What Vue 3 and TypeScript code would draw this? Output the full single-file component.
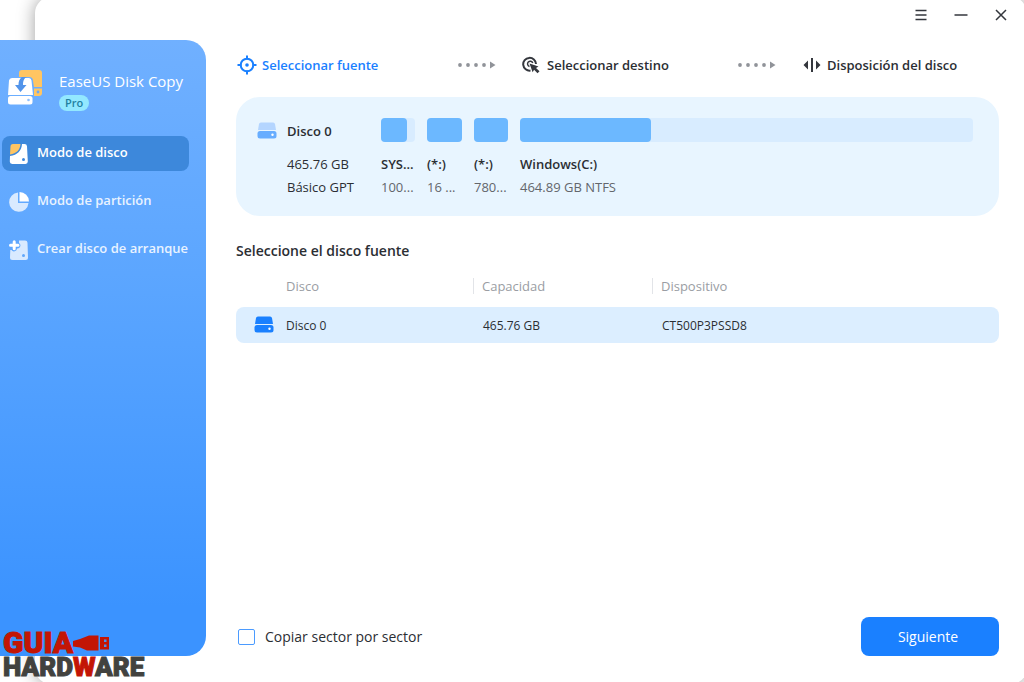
<script setup lang="ts">
import { ref } from 'vue'

interface Mode {
  id: 'disk' | 'partition' | 'boot'
  label: string
}

interface Partition {
  name: string
  detail: string
  used: number
}

const modes: Mode[] = [
  { id: 'disk', label: 'Modo de disco' },
  { id: 'partition', label: 'Modo de partición' },
  { id: 'boot', label: 'Crear disco de arranque' },
]

const partitions: Partition[] = [
  { name: 'SYS...', detail: '100...', used: 76 },
  { name: '(*:)', detail: '16 ...', used: 100 },
  { name: '(*:)', detail: '780...', used: 100 },
  { name: 'Windows(C:)', detail: '464.89 GB NTFS', used: 29 },
]

const activeMode = ref<Mode['id']>('disk')
const sectorBySector = ref(false)
</script>

<template>
  <div class="app">
    <aside class="sidebar">
      <div class="brand">
        <svg class="brand-icon" width="36" height="36" viewBox="0 0 36 36" aria-hidden="true">
          <path d="M14 0h17a3 3 0 0 1 3 3v14h-8l-1-6a4 4 0 0 0-4-4H11V3a3 3 0 0 1 3-3z" fill="#ffc562" />
          <path d="M26 18.500h8V23a3 3 0 0 1-3 3h-5z" fill="#ffc562" />
          <circle cx="30" cy="22" r="1.400" fill="#6aa9f5" />
          <path d="M4 8h17a3 3 0 0 1 2.500 2.500L25 25H0l1-14.500A3 3 0 0 1 4 8z" fill="#fff" />
          <path d="M19 7c-3 1-4 4-4 8h3.500L12.500 22 7 15h3.500c0-4 1-6 3.500-8z" fill="#5294ea" />
          <rect x="0" y="26" width="24.500" height="8.500" rx="2.500" fill="#fff" />
          <circle cx="20.500" cy="30" r="1.300" fill="#8fc1ff" />
        </svg>
        <div class="brand-text">
          <span class="brand-name">EaseUS Disk Copy</span>
          <span class="badge">Pro</span>
        </div>
      </div>
      <nav class="nav">
        <button
          v-for="mode in modes"
          :key="mode.id"
          type="button"
          class="nav-item"
          :class="{ active: activeMode === mode.id }"
          @click="activeMode = mode.id"
        >
          <svg v-if="mode.id === 'disk'" class="nav-icon" width="20" height="20" viewBox="0 0 20 20" aria-hidden="true">
            <path d="M4 0h7.500C11 6 7.500 9.500 1 10.500L1.500 2.500A2.500 2.500 0 0 1 4 0z" fill="#ffc562" />
            <path d="M13 0h2.500a2.500 2.500 0 0 1 2.500 2.300l0.800 15.200A2.500 2.500 0 0 1 16.500 20H3.200a2.500 2.500 0 0 1-2.400-2.500L1 12C8.500 11 12.500 7 13 0z" fill="#fff" />
            <circle cx="14.500" cy="15.500" r="1.500" fill="#3d88db" />
          </svg>
          <svg v-else-if="mode.id === 'partition'" class="nav-icon" width="20" height="20" viewBox="0 0 20 20" aria-hidden="true">
            <path d="M9 0.500V11h10.500A9.700 9.700 0 1 1 9 0.500z" fill="#d9eaff" />
            <path d="M10.500 0A9.500 9.500 0 0 1 20 9.500h-9.500z" fill="#fff" />
          </svg>
          <svg v-else class="nav-icon" width="20" height="20" viewBox="0 0 20 20" aria-hidden="true">
            <path d="M10 0.500h6a2.500 2.500 0 0 1 2.500 2.300L19 17.500A2.500 2.500 0 0 1 16.500 20H3.500A2.500 2.500 0 0 1 1 17.500L1.300 10h1.200a3 3 0 0 0 5.500-1.500A3 3 0 0 0 10 3z" fill="#d9eaff" />
            <path d="M5.200 1.800v7M1.500 5.300h7.500" stroke="#fff" stroke-width="3" stroke-linecap="round" />
            <circle cx="14.500" cy="15.500" r="1.500" fill="#62a8fb" />
          </svg>
          <span class="nav-label">{{ mode.label }}</span>
        </button>
      </nav>
    </aside>

    <main class="main">
      <header class="titlebar">
        <button type="button" class="window-button" aria-label="Menú">
          <svg width="14" height="14" viewBox="0 0 14 14"><path d="M1.500 2.500h11M1.500 7h11M1.500 11.500h11" /></svg>
        </button>
        <button type="button" class="window-button" aria-label="Minimizar">
          <svg width="14" height="14" viewBox="0 0 14 14"><path d="M0.500 7h13" /></svg>
        </button>
        <button type="button" class="window-button" aria-label="Cerrar">
          <svg width="14" height="14" viewBox="0 0 14 14"><path d="M2 2l10 10M12 2L2 12" /></svg>
        </button>
      </header>

      <ol class="steps">
        <li class="step current">
          <svg width="20" height="20" viewBox="0 0 20 20" fill="none" stroke="#1a80ff" stroke-width="2" aria-hidden="true">
            <circle cx="10" cy="10" r="6.300" />
            <path d="M10 0.500v4M10 15.500v4M0.500 10h4M15.500 10h4" />
            <circle cx="10" cy="10" r="1.800" fill="#1a80ff" stroke="none" />
          </svg>
          <span>Seleccionar fuente</span>
          <svg class="arrow" width="39" height="8" viewBox="0 0 39 8" fill="#909399" aria-hidden="true">
            <circle cx="3" cy="4" r="1.900" /><circle cx="11" cy="4" r="1.900" /><circle cx="19" cy="4" r="1.900" /><circle cx="27" cy="4" r="1.900" />
            <path d="M33 0.500L38.500 4L33 7.500z" />
          </svg>
        </li>
        <li class="step">
          <svg width="20" height="20" viewBox="0 0 20 20" fill="none" stroke="#34373d" stroke-width="2" aria-hidden="true">
            <path d="M8.500 15.600A6.400 6.400 0 1 1 14 9" />
            <path d="M7.500 11.500a2.700 2.700 0 1 1 3.300-3.500" stroke-width="1.500" />
            <path d="M7.500 8.500l9 3-2.500 1.500 3.500 3.200-2 2-3.400-3.400-1.500 2.400z" fill="#34373d" stroke="none" />
          </svg>
          <span>Seleccionar destino</span>
          <svg class="arrow" width="39" height="8" viewBox="0 0 39 8" fill="#909399" aria-hidden="true">
            <circle cx="3" cy="4" r="1.900" /><circle cx="11" cy="4" r="1.900" /><circle cx="19" cy="4" r="1.900" /><circle cx="27" cy="4" r="1.900" />
            <path d="M33 0.500L38.500 4L33 7.500z" />
          </svg>
        </li>
        <li class="step">
          <svg width="20" height="20" viewBox="0 0 20 20" fill="#34373d" aria-hidden="true">
            <path d="M6 5.500v9L1.500 10zM14 5.500v9l4.500-4.500z" />
            <rect x="9" y="3" width="2" height="14" />
          </svg>
          <span>Disposición del disco</span>
        </li>
      </ol>

      <section class="disk-card">
        <svg class="card-icon" width="20" height="17" viewBox="0 0 20 17" aria-hidden="true">
          <path d="M4 0.500h12a2 2 0 0 1 2 1.600L19 8H1L2 2.100A2 2 0 0 1 4 0.500z" fill="#b4d5ff" />
          <rect x="0.500" y="9" width="19" height="7.500" rx="2.500" fill="#67adff" />
          <circle cx="15.500" cy="12.700" r="1.200" fill="#fff" />
        </svg>
        <div class="disk-info">
          <strong class="disk-name">Disco 0</strong>
          <span class="line">465.76 GB</span>
          <span class="line">Básico GPT</span>
        </div>
        <div class="partitions">
          <div v-for="(part, index) in partitions" :key="index" class="partition">
            <div class="bar"><div class="bar-used" :style="{ width: part.used + '%' }"></div></div>
            <strong class="line">{{ part.name }}</strong>
            <span class="line detail">{{ part.detail }}</span>
          </div>
        </div>
      </section>

      <h2 class="heading">Seleccione el disco fuente</h2>

      <table class="disks">
        <colgroup>
          <col class="col-disk" />
          <col class="col-capacity" />
          <col />
        </colgroup>
        <thead>
          <tr>
            <th scope="col">Disco</th>
            <th scope="col"><span class="divided">Capacidad</span></th>
            <th scope="col"><span class="divided">Dispositivo</span></th>
          </tr>
        </thead>
        <tbody>
          <tr>
            <td>
              <div class="disk-cell">
                <svg width="20" height="17" viewBox="0 0 20 17" fill="#1a80ff" aria-hidden="true">
                  <path d="M4 0.500h12a2 2 0 0 1 2 1.600L19 8H1L2 2.100A2 2 0 0 1 4 0.500z" />
                  <rect x="0.500" y="9" width="19" height="7.500" rx="2.500" />
                  <circle cx="15.500" cy="12.700" r="1.200" fill="#fff" />
                </svg>
                <span>Disco 0</span>
              </div>
            </td>
            <td>465.76 GB</td>
            <td>CT500P3PSSD8</td>
          </tr>
        </tbody>
      </table>

      <footer class="footer">
        <label class="check">
          <input v-model="sectorBySector" type="checkbox" />
          <span>Copiar sector por sector</span>
        </label>
        <button type="button" class="next">Siguiente</button>
      </footer>
    </main>

    <div class="watermark">
      <div class="mark-top">
        <span>GUIA</span>
        <svg width="36" height="18" viewBox="0 0 36 18" aria-hidden="true">
          <path d="M0 7l7-2 9-3.500h9.500v15H14L7 13.500l-7-1z" fill="#c31505" />
          <path d="M27 3h9v12.500h-9z" fill="#c31505" />
          <path d="M31 5.500h2.500V8H31zM31 10.500h2.500V13H31z" fill="#4b91ec" />
        </svg>
      </div>
      <div class="mark-bottom">HARD<span>W</span>ARE</div>
    </div>
  </div>
</template>

<style>
body {
  margin: 0;
  background: #fff;
}
</style>

<style scoped>
.app {
  position: relative;
  display: flex;
  min-height: 100vh;
  overflow: hidden;
  font-family: "Open Sans", "Noto Sans", sans-serif;
  font-size: 13px;
  line-height: 20px;
  color: #2b2e33;
}

.app::before {
  content: "";
  position: absolute;
  inset: -3px -3px -2px 35px;
  border-radius: 16px;
  background: #fff;
  box-shadow: 0 0 18px rgba(0, 0, 0, 0.38);
}

.sidebar {
  position: relative;
  flex: none;
  box-sizing: border-box;
  width: 206px;
  margin: 40px 0 26px;
  padding-top: 30px;
  border-radius: 0 20px 20px 0;
  background: linear-gradient(#70b0ff, #5ca6ff 38%, #3b93ff 92%);
}

.brand {
  display: flex;
  gap: 15px;
  padding-left: 8px;
}

.brand-icon {
  flex: none;
}

.brand-text {
  display: flex;
  flex-direction: column;
  align-items: flex-start;
  gap: 3px;
}

.brand-name {
  font-size: 15px;
  line-height: 22px;
  white-space: nowrap;
  color: #fff;
}

.badge {
  padding: 0 6px;
  border-radius: 8px;
  background: #93e8ff;
  color: #22809f;
  font-size: 11px;
  font-weight: 600;
  line-height: 16px;
}

.nav {
  display: flex;
  flex-direction: column;
  gap: 13px;
  margin: 25px 17px 0 2px;
}

.nav-item {
  display: flex;
  align-items: center;
  gap: 8px;
  height: 35px;
  padding: 0 0 0 7px;
  border: 0;
  border-radius: 8px;
  background: none;
  color: #e9f3ff;
  font: inherit;
  font-weight: 600;
  white-space: nowrap;
}

.nav-item.active {
  background: #3d88db;
  color: #fff;
}

.nav-icon {
  flex: none;
}

.nav-label {
  padding-bottom: 4px;
}

.main {
  position: relative;
  flex: 1;
  min-width: 0;
  display: flex;
  flex-direction: column;
  box-sizing: border-box;
  padding: 0 25px 26px 30px;
}

.titlebar {
  display: flex;
  justify-content: flex-end;
  gap: 20px;
  height: 30px;
  margin-right: -12px;
}

.window-button {
  display: grid;
  place-items: center;
  width: 20px;
  padding: 0;
  border: 0;
  background: none;
}

.window-button path {
  fill: none;
  stroke: #33363c;
  stroke-width: 1.5;
}

.steps {
  display: grid;
  grid-template-columns: 285fr 280fr 198fr;
  margin: 25px 0 0;
  padding: 0;
  list-style: none;
}

.step {
  display: flex;
  align-items: center;
  gap: 5px;
  padding: 0 25px 0 1px;
  font-weight: 600;
  white-space: nowrap;
}

.step:last-child {
  padding-right: 0;
}

.step.current {
  color: #1a80ff;
}

.step svg {
  flex: none;
}

.step .arrow {
  margin-left: auto;
}

.disk-card {
  display: flex;
  box-sizing: border-box;
  min-height: 119px;
  margin-top: 22px;
  padding: 21px 26px 17px 21px;
  border-radius: 24px;
  background: #e8f5ff;
}

.card-icon {
  flex: none;
  margin-top: 4px;
}

.disk-info {
  display: flex;
  flex-direction: column;
  flex: none;
  width: 94px;
  margin-left: 10px;
}

.disk-name {
  margin-bottom: 9px;
  font-weight: 600;
  line-height: 26px;
}

.line {
  font-size: 13px;
  line-height: 23px;
  white-space: nowrap;
}

strong.line {
  font-weight: 600;
}

.detail {
  color: #63666c;
}

.partitions {
  display: grid;
  flex: 1;
  grid-template-columns: 34px 35px 34px 1fr;
  gap: 12px;
}

.partition {
  display: flex;
  flex-direction: column;
  min-width: 0;
}

.bar {
  height: 24px;
  margin-bottom: 11px;
  border-radius: 4px;
  background: #d8ecff;
}

.bar-used {
  height: 100%;
  border-radius: 4px;
  background: #6cb8ff;
}

.heading {
  margin: 24px 0 0;
  font-size: 14px;
  font-weight: 600;
  line-height: 22px;
}

.disks {
  width: 100%;
  margin-top: 13px;
  border-collapse: separate;
  border-spacing: 0;
  table-layout: fixed;
  text-align: left;
}

.col-disk {
  width: 237px;
}

.col-capacity {
  width: 179px;
}

.disks th {
  height: 22px;
  padding: 0 0 10px;
  color: #9a9da3;
  font-weight: 400;
  line-height: 20px;
}

.disks th:first-child {
  padding-left: 50px;
}

.divided {
  display: block;
  padding-left: 8px;
  border-left: 1px solid #e2e4e8;
  line-height: 16px;
}

.disks td {
  height: 36px;
  padding: 2px 0 0 10px;
  box-sizing: border-box;
  background: #dceeff;
  font-size: 12px;
}

.disks td:first-child {
  padding-left: 18px;
  border-radius: 8px 0 0 8px;
}

.disks td:last-child {
  border-radius: 0 8px 8px 0;
}

.disk-cell {
  display: flex;
  align-items: center;
  gap: 12px;
  font-weight: 500;
}

.disk-cell svg {
  margin-bottom: 3px;
}

.footer {
  display: flex;
  align-items: center;
  justify-content: space-between;
  margin-top: auto;
}

.check {
  display: flex;
  align-items: center;
  gap: 10px;
  margin-left: 2px;
  font-size: 14px;
}

.check input {
  appearance: none;
  box-sizing: border-box;
  width: 17px;
  height: 16px;
  margin: 0;
  border: 1px solid #4b9bff;
  border-radius: 2px;
  background: #fff;
}

.check input:checked {
  background: #1a80ff;
}

.next {
  min-width: 138px;
  height: 39px;
  padding: 0 24px 0 20px;
  border: 0;
  border-radius: 8px;
  background: #1a80ff;
  color: #fff;
  font: inherit;
  font-size: 14px;
  font-weight: 500;
}

.watermark {
  position: absolute;
  left: 3px;
  bottom: 2px;
  font-family: Roboto, "Open Sans", sans-serif;
  font-weight: 900;
}

.mark-top {
  display: flex;
  align-items: center;
  color: #c31505;
  font-size: 30px;
  line-height: 22px;
  -webkit-text-stroke: 1px #c31505;
}

.mark-bottom {
  color: #42423f;
  font-size: 26px;
  line-height: 26px;
  -webkit-text-stroke: 1px #42423f;
}

.mark-bottom span {
  color: #c31505;
  -webkit-text-stroke: 1px #c31505;
}
</style>
